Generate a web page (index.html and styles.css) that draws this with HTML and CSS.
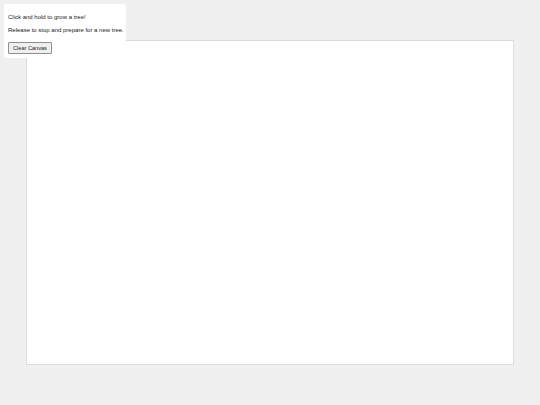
FILE: index.html
```html
<!DOCTYPE html>
<html>
<head>
<meta charset="utf-8">
<link rel="stylesheet" href="styles.css">
</head>
<body>
<div class="panel">
  <p>Click and hold to grow a tree!</p>
  <p>Release to stop and prepare for a new tree.</p>
  <button class="clear">Clear Canvas</button>
</div>
<main class="stage">
  <canvas class="board" width="488" height="325"></canvas>
</main>
</body>
</html>
```
FILE: styles.css
```css
html, body {
  margin: 0;
  padding: 0;
  background: #f0f0f0;
  font-family: "Liberation Sans", Arial, sans-serif;
}

.stage {
  display: flex;
  justify-content: center;
  padding-top: 40px;
}

.board {
  display: block;
  width: 486px;
  height: 323px;
  background: #fff;
  border: 1px solid #dcdcdc;
}

.panel {
  position: absolute;
  top: 4px;
  left: 4px;
  width: 114px;
  padding: 10px 4px 4px;
  background: #fff;
  border-radius: 3px;
  font-size: 6px;
  color: #222;
  white-space: nowrap;
}

.panel p {
  margin: 0 0 6px;
  line-height: 7px;
}

.clear {
  display: block;
  margin-top: 8px;
  padding: 2px 4px;
  height: 12px;
  font-family: "Liberation Sans", Arial, sans-serif;
  font-size: 5.6px;
  line-height: 6px;
  color: #222;
  background: #efefef;
  border: 1px solid #8f8f8f;
  border-radius: 1px;
}
```
